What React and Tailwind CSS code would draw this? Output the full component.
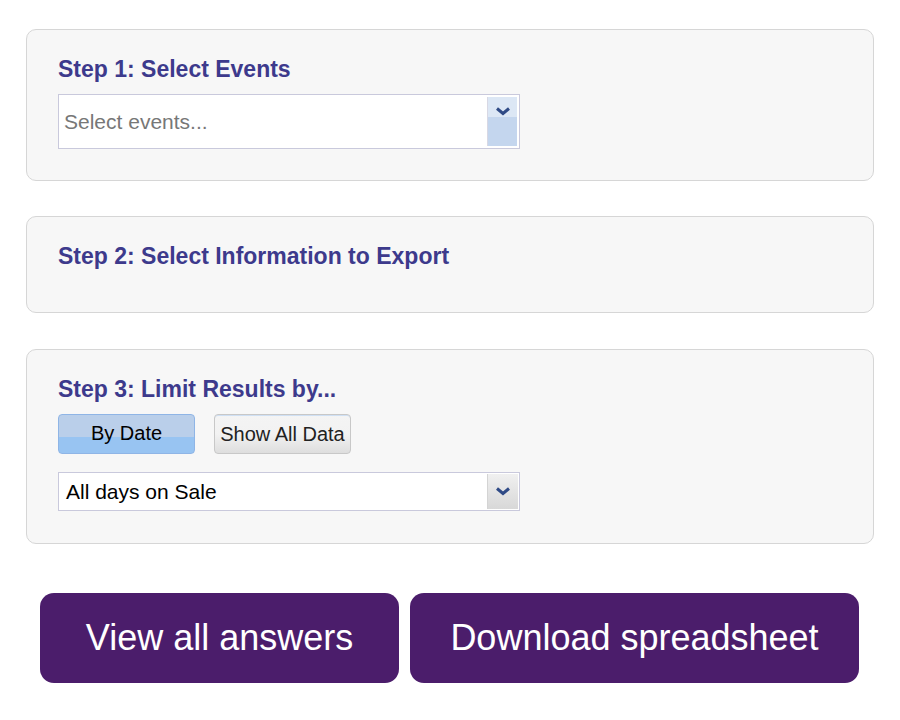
import React, { useState } from 'react';

function Chevron() {
  return (
    <svg width="14" height="9" viewBox="0 0 14 9">
      <path d="M1 1.5 L7 6.5 L13 1.5" fill="none" stroke="#2f4a86" strokeWidth="3" />
    </svg>
  );
}

function Panel({ title, children, className = '' }) {
  return (
    <div className={`rounded-[10px] border border-[#d6d6d6] bg-[#f7f7f7] pl-[31px] pr-6 pt-[26px] ${className}`}>
      <h2 className="text-[23px] leading-[26px] font-bold text-[#3d3a8c]">{title}</h2>
      {children}
    </div>
  );
}

export default function App() {
  const [mode, setMode] = useState('date');

  return (
    <div className="min-h-[720px] bg-white px-[26px] pt-[29px] font-['Liberation_Sans',Arial,sans-serif]">
      <div className="w-[848px]">
        <Panel title="Step 1: Select Events" className="h-[152px]">
          {/* event picker */}
          <div className="mt-[12px] flex h-[55px] w-[462px] border border-[#c9c9dc] bg-white">
            <div className="flex flex-1 items-center pl-[5px] text-[21px] text-[#777]">Select events...</div>
            <div className="my-[2px] mr-[2px] flex w-[30px] flex-col border-l border-[#d8d8e4]">
              <div className="flex h-[20px] items-end justify-center bg-[#dce7f5] pb-[1px]">
                <Chevron />
              </div>
              <div className="flex-1 bg-[#c4d6ee]" />
            </div>
          </div>
        </Panel>

        <Panel title="Step 2: Select Information to Export" className="mt-[35px] h-[97px]" />

        <Panel title="Step 3: Limit Results by..." className="mt-[36px] h-[195px]">
          <div className="mt-[12px] flex gap-[19px]">
            <button
              onClick={() => setMode('date')}
              className={`flex h-[40px] w-[137px] items-center justify-center rounded-[4px] border pb-[2px] text-[20px] text-black ${
                mode === 'date'
                  ? 'border-[#8fb5e6] bg-[linear-gradient(#bacfea_0,#bacfea_58%,#98c4f2_58%,#98c4f2_100%)]'
                  : 'border-[#c8c8c8] bg-gradient-to-b from-[#f4f4f4] to-[#dedede]'
              }`}
            >
              By Date
            </button>
            <button
              onClick={() => setMode('all')}
              className={`flex h-[40px] w-[137px] items-center justify-center rounded-[4px] border text-[20px] text-[#222] ${
                mode === 'all'
                  ? 'border-[#8fb5e6] bg-[linear-gradient(#bacfea_0,#bacfea_58%,#98c4f2_58%,#98c4f2_100%)]'
                  : 'border-[#c8c8c8] bg-gradient-to-b from-[#f4f4f4] via-[#f2f2f2] to-[#dedede] shadow-[inset_0_1px_0_#cfe0f4]'
              }`}
            >
              Show All Data
            </button>
          </div>

          {/* date range */}
          <div className="mt-[18px] flex h-[39px] w-[462px] border border-[#c9c9dc] bg-white">
            <div className="flex flex-1 items-center pl-[7px] text-[21px] text-black">All days on Sale</div>
            <div className="my-[1px] mr-[1px] flex w-[31px] items-center justify-center border-l border-[#d4d4d4] bg-gradient-to-b from-[#f0f0f0] to-[#d8d8d8]">
              <Chevron />
            </div>
          </div>
        </Panel>
      </div>

      <div className="mt-[49px] flex gap-[11px] pl-[14px]">
        <button className="h-[90px] w-[359px] rounded-[14px] bg-[#4b1d6b] text-[36px] text-white">View all answers</button>
        <button className="h-[90px] w-[449px] rounded-[14px] bg-[#4b1d6b] text-[36px] text-white">Download spreadsheet</button>
      </div>
    </div>
  );
}
